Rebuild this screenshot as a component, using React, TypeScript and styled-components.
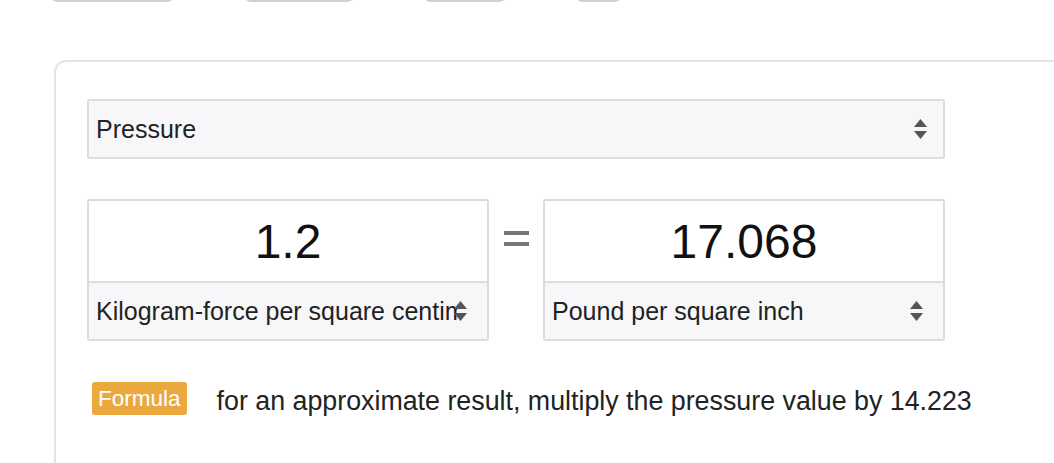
import React from "react";
import styled, { createGlobalStyle } from "styled-components";

const GlobalStyle = createGlobalStyle`
  html, body {
    margin: 0;
    padding: 0;
    background: #ffffff;
    overflow: hidden;
    font-family: "Liberation Sans", Arial, Helvetica, sans-serif;
    color: #222222;
  }
`;

const Page = styled.div`
  width: 1054px;
  height: 463px;
  overflow: hidden;
`;

const TopNav = styled.nav`
  display: flex;
  gap: 68px;
  margin: -30px 0 0 50px;
  height: 32px;
`;

const NavTab = styled.div<{ $w: number }>`
  width: ${(p) => p.$w}px;
  height: 32px;
  box-sizing: border-box;
  border: 2px solid #cfcfcf;
  border-radius: 8px;
  background: #ffffff;
`;

const Card = styled.section`
  box-sizing: border-box;
  width: 1120px;
  min-height: 460px;
  margin: 58px 0 0 54px;
  border: 2px solid #e4e4e4;
  border-radius: 12px;
  padding: 37px 0 0 31px;
`;

const SelectBox = styled.div<{ $width?: number }>`
  box-sizing: border-box;
  display: flex;
  align-items: center;
  height: 60px;
  width: ${(p) => (p.$width ? `${p.$width}px` : "100%")};
  background: #f7f7f9;
  border: 2px solid #dcdcdf;
  border-radius: 2px;
  padding: 0 16px 0 7px;
  font-size: 25px;
  color: #222222;
`;

const SelectText = styled.span`
  flex: 1;
  min-width: 0;
  overflow: hidden;
  white-space: nowrap;
`;

const Arrows = styled.svg`
  flex: none;
  width: 13px;
  height: 20px;
  margin-left: -6px;
`;

const ConverterRow = styled.div`
  display: grid;
  grid-template-columns: 402px 54px 402px;
  margin-top: 40px;
`;

const UnitBox = styled.div`
  box-sizing: border-box;
  display: flex;
  flex-direction: column;
  height: 142px;
  border: 2px solid #dcdcdf;
  border-radius: 3px;
  overflow: hidden;
`;

const ValueField = styled.div`
  height: 80px;
  display: flex;
  align-items: center;
  justify-content: center;
  font-size: 48px;
  color: #111111;
  background: #ffffff;
  border-bottom: 2px solid #dcdcdf;
`;

const UnitSelect = styled(SelectBox)`
  flex: 1;
  height: auto;
  border: none;
  border-radius: 0;
  padding: 0 20px 0 7px;
`;

const Equals = styled.div`
  display: flex;
  align-items: flex-start;
  justify-content: center;
  padding-top: 32px;
`;

const EqualsBar = styled.div`
  width: 25px;
  height: 15px;
  box-sizing: border-box;
  border-top: 4px solid #777777;
  border-bottom: 4px solid #777777;
`;

const FormulaRow = styled.div`
  display: flex;
  align-items: center;
  margin: 39px 0 0 5px;
  gap: 30px;
`;

const Badge = styled.span`
  display: inline-flex;
  align-items: center;
  height: 33px;
  padding: 0 6px;
  border-radius: 3px;
  background: #eaa83f;
  color: #ffffff;
  font-size: 22.5px;
`;

const FormulaText = styled.span`
  font-size: 26.8px;
  color: #222222;
  padding-top: 6px;
`;

const UpDown = () => (
  <Arrows viewBox="0 0 13 20">
    <path d="M6.5 0 L13 8 L0 8 Z" fill="#555555" />
    <path d="M6.5 20 L13 12 L0 12 Z" fill="#555555" />
  </Arrows>
);

export default function App() {
  return (
    <>
      <GlobalStyle />
      <Page>
        <TopNav>
          <NavTab $w={125} />
          <NavTab $w={112} />
          <NavTab $w={84} />
          <NavTab $w={47} />
        </TopNav>
        <Card>
          <SelectBox $width={858}>
            <SelectText>Pressure</SelectText>
            <UpDown />
          </SelectBox>
          <ConverterRow>
            <UnitBox>
              <ValueField>1.2</ValueField>
              <UnitSelect>
                <SelectText>Kilogram-force per square centimetre</SelectText>
                <UpDown />
              </UnitSelect>
            </UnitBox>
            <Equals>
              <EqualsBar />
            </Equals>
            <UnitBox>
              <ValueField>17.068</ValueField>
              <UnitSelect>
                <SelectText>Pound per square inch</SelectText>
                <UpDown />
              </UnitSelect>
            </UnitBox>
          </ConverterRow>
          <FormulaRow>
            <Badge>Formula</Badge>
            <FormulaText>
              for an approximate result, multiply the pressure value by 14.223
            </FormulaText>
          </FormulaRow>
        </Card>
      </Page>
    </>
  );
}
